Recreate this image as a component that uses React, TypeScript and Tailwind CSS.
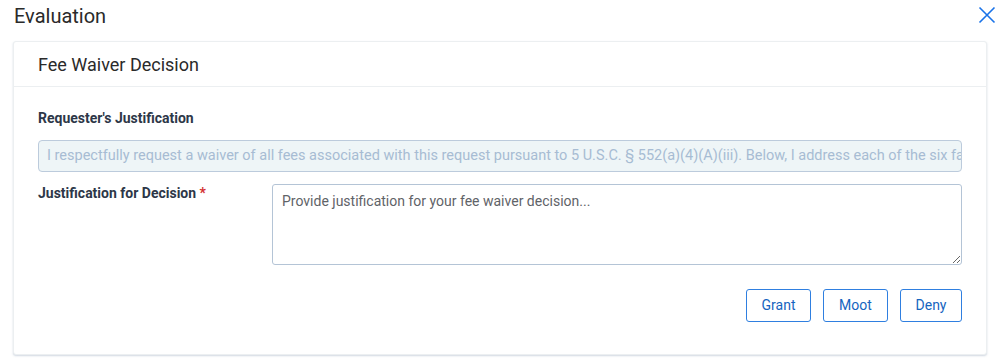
import React from 'react';

const font = "font-['Roboto','Liberation_Sans',sans-serif]";

const CloseIcon = () => (
    <svg width="18" height="18" viewBox="0 0 18 18" fill="none">
        <path d="M1.5 1.5L16.5 16.5M16.5 1.5L1.5 16.5" stroke="#1a73e8" strokeWidth="1.6"/>
    </svg>
);

const DecisionButton = ({label, width}: {label: string, width: string}) => (
    <button
        className={`${width} h-[33px] rounded-[3px] border border-[#2f7fe0] bg-white text-[14px] text-[#1565c0]`}>
        {label}
    </button>
);

const App = () => {
    const justification = "I respectfully request a waiver of all fees associated with this request pursuant to 5 U.S.C. § 552(a)(4)(A)(iii). Below, I address each of the six factors considered in evaluating fee waiver requests."

    return (
        <div className={`${font} w-full h-[361px] bg-white overflow-hidden`}>
            <div className='flex flex-row justify-between items-center h-[31px] pl-[14px] pr-[4px]'>
                <div className='text-[20px] text-[#2a2a2a] leading-none'>Evaluation</div>
                <button className='w-[18px] h-[18px] mb-[1px]'><CloseIcon/></button>
            </div>
            <div
                className='mx-[13px] mt-[10px] border border-[#eceff1] rounded-[3px] bg-white shadow-[0_1px_2px_rgba(120,140,170,0.35)]'>
                <div className='h-[45px] flex items-center px-[24px] border-b border-[#eceff1]'>
                    <div className='text-[18px] text-[#2a2a2a]'>Fee Waiver Decision</div>
                </div>
                <div className='px-[24px] pt-[21px] pb-[32px]'>
                    <div className='text-[14px] font-bold text-[#2d3748] leading-[20px]'>
                        Requester's Justification
                    </div>
                    <div
                        className='mt-[12px] h-[32px] rounded-[4px] border border-[#bccbdc] bg-[#eef5f7] px-[8px] flex items-center overflow-hidden'>
                        <div className='text-[14.5px] text-[#a7bcd3] whitespace-nowrap'>{justification}</div>
                    </div>
                    <div className='flex flex-row mt-[12px]'>
                        <div className='w-[234px] shrink-0 text-[14px] font-bold text-[#2d3748] leading-[14px] mt-[2px]'>
                            Justification for Decision <span className='text-[#d32f2f]'>*</span>
                        </div>
                        <textarea
                            placeholder='Provide justification for your fee waiver decision...'
                            className='flex-1 h-[81px] rounded-[3px] border border-[#b4c4d6] px-[9px] py-[6px] text-[14px] text-[#333] placeholder:text-[#5f6368] outline-none'/>
                    </div>
                    <div className='flex flex-row justify-end gap-[12px] mt-[24px]'>
                        <DecisionButton label='Grant' width='w-[65px]'/>
                        <DecisionButton label='Moot' width='w-[65px]'/>
                        <DecisionButton label='Deny' width='w-[62px]'/>
                    </div>
                </div>
            </div>
        </div>
    )
}

export default App;
